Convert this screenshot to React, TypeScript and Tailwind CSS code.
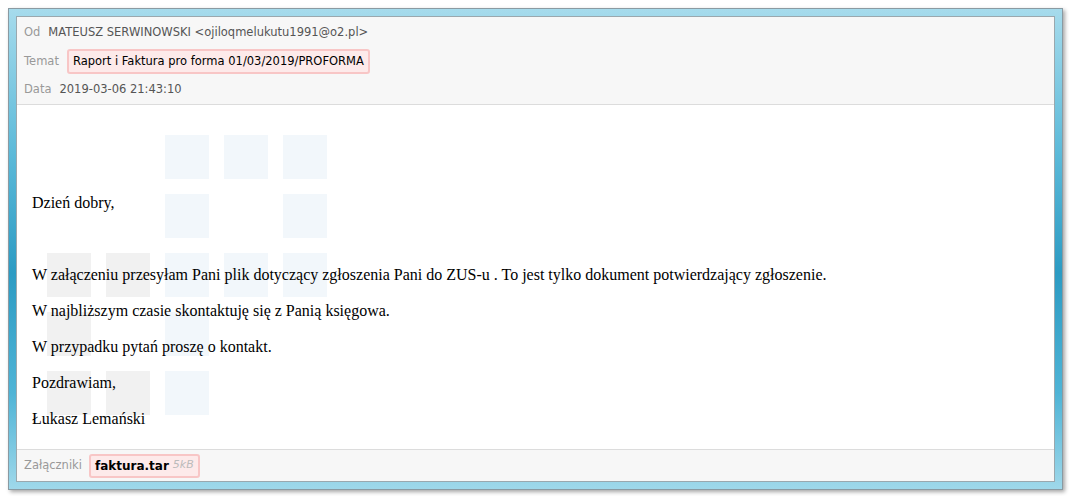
import React from "react";

const cells: { r: number; c: number; t: "b" | "g" }[] = [
  { r: 0, c: 2, t: "b" }, { r: 0, c: 3, t: "b" }, { r: 0, c: 4, t: "b" },
  { r: 1, c: 2, t: "b" }, { r: 1, c: 4, t: "b" },
  { r: 2, c: 0, t: "g" }, { r: 2, c: 1, t: "g" }, { r: 2, c: 2, t: "b" }, { r: 2, c: 3, t: "b" }, { r: 2, c: 4, t: "b" },
  { r: 3, c: 0, t: "g" }, { r: 3, c: 2, t: "b" },
  { r: 4, c: 0, t: "g" }, { r: 4, c: 1, t: "g" }, { r: 4, c: 2, t: "b" },
];

export default function App() {
  return (
    <div className="w-[1069px] h-[496px] bg-white p-[8px] pr-[6px] pb-[6px]">
      <div className="w-[1055px] h-[482px] border border-[#8a9aa2] p-[7px] shadow-[2px_2px_4px_rgba(0,0,0,0.35)] bg-[linear-gradient(180deg,#a6dbec_0%,#5cbad9_30%,#2c9bc3_55%,#4fb4d6_80%,#9fd8ea_100%)]">
        <div className="w-full h-full border border-[#9aa8ae] bg-white flex flex-col overflow-hidden" style={{ fontFamily: '"DejaVu Sans", Verdana, sans-serif' }}>
          <div className="bg-[#f7f7f7] border-b border-[#dcdcdc] px-[7px] text-[11.5px] pt-[1px]">
            <div className="h-[29px] flex items-center gap-[8px]">
              <span className="text-[#999]">Od</span>
              <span className="text-[#555]">MATEUSZ SERWINOWSKI &lt;ojiloqmelukutu1991@o2.pl&gt;</span>
            </div>
            <div className="h-[29px] flex items-center gap-[8px]">
              <span className="text-[#999]">Temat</span>
              <span className="h-[25px] flex items-center px-[4px] bg-[#fdeaea] border-2 border-[#f8c6c6] rounded-[3px] text-black">
                Raport i Faktura pro forma 01/03/2019/PROFORMA
              </span>
            </div>
            <div className="h-[28px] flex items-center gap-[8px]">
              <span className="text-[#999]">Data</span>
              <span className="text-[#555]">2019-03-06 21:43:10</span>
            </div>
          </div>
          <div className="relative flex-1">
            <div className="absolute left-[30px] top-[30px] grid grid-cols-[repeat(5,44px)] grid-rows-[repeat(5,44px)] gap-[15px]">
              {cells.map((x, i) => (
                <div
                  key={i}
                  className={x.t === "b" ? "bg-[#f2f7fb]" : "bg-[#f1f1f1]"}
                  style={{ gridRow: x.r + 1, gridColumn: x.c + 1 }}
                />
              ))}
            </div>
            <div className="relative pl-[15px] pt-[88px] text-[16px] leading-[20px] text-black flex flex-col gap-[16px]" style={{ fontFamily: '"Liberation Serif", "Times New Roman", serif' }}>
              <p>Dzień dobry,</p>
              <p className="h-[20px]"></p>
              <p>W załączeniu przesyłam Pani plik dotyczący zgłoszenia Pani do ZUS-u . To jest tylko dokument potwierdzający zgłoszenie.</p>
              <p>W najbliższym czasie skontaktuję się z Panią księgowa.</p>
              <p>W przypadku pytań proszę o kontakt.</p>
              <p>Pozdrawiam,</p>
              <p>Łukasz Lemański</p>
            </div>
          </div>
          <div className="h-[32px] bg-[#f7f7f7] border-t border-[#dcdcdc] px-[7px] flex items-center gap-[7px] text-[11px]">
            <span className="text-[#999] text-[11.5px]">Załączniki</span>
            <span className="h-[24px] flex items-center gap-[4px] px-[4px] bg-[#fdeaea] border-2 border-[#f8c6c6] rounded-[3px]">
              <span className="font-bold text-black text-[12px]">faktura.tar</span>
              <span className="italic text-[#bbb]">5kB</span>
            </span>
          </div>
        </div>
      </div>
    </div>
  );
}
